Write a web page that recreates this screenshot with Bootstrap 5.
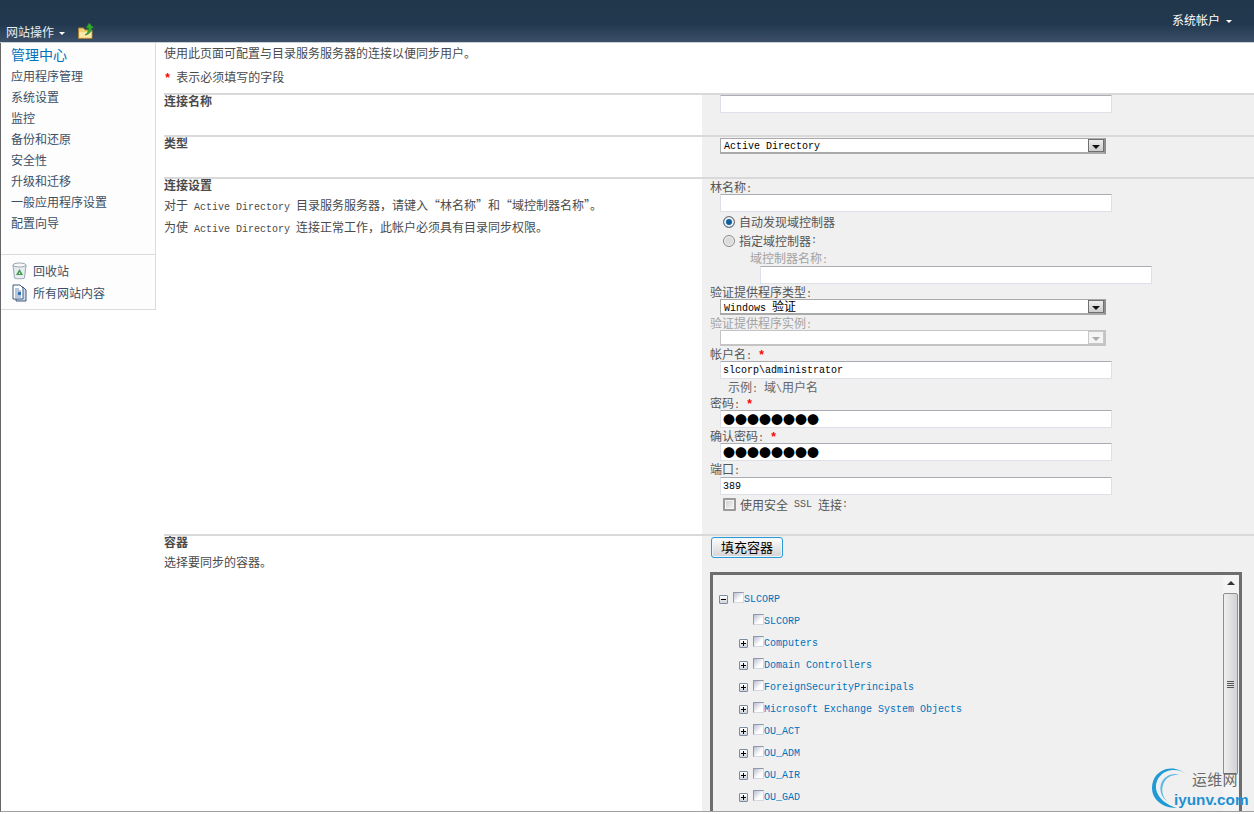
<!DOCTYPE html>
<html lang="zh-CN">
<head>
<meta charset="utf-8">
<title>连接设置</title>
<link href="https://cdn.jsdelivr.net/npm/bootstrap@5.3.0/dist/css/bootstrap.min.css" rel="stylesheet">
<style>
html,body{height:814px;overflow:hidden;background:#fff}
body{font-family:"Noto Sans CJK SC","Liberation Sans",sans-serif;font-size:12px;line-height:15px;color:#4a4a4a;position:relative}
.tl{font-family:"Liberation Mono",monospace;font-size:10px;line-height:1}
.topbar{height:43px;background:linear-gradient(#20374c 0,#21384e 24px,#3c5068 42px);border-bottom:1px solid #c6ced6;color:#fff;padding:0 22px 0 6px}
.site-act{align-self:flex-end;height:20px;line-height:20px;color:#e9eef3}
.sys-user{margin-top:12px;line-height:15px;color:#fff}
.drop-tri{display:inline-block;width:0;height:0;border:3px solid transparent;border-top:3px solid #fff;border-bottom:0;vertical-align:middle}
.site-act .drop-tri{margin-left:5px}
.sys-user .drop-tri{margin-left:6px}
.up-icon{width:17px;height:16px;margin:0 0 3px 13px;align-self:flex-end}
.shell{height:769px;border-left:1px solid #666;border-bottom:1px solid #a0a0a0}
.side{width:155px;height:267px;flex:none;background:#fdfdfd;border-right:1px solid #dcdcdc;border-bottom:1px solid #dcdcdc}
.side-top{padding:1px 0 0 10px;height:211px}
.side-title{font-size:14px;line-height:21px;color:#0072bc}
.side .nav-link{padding:0;line-height:21px;color:#3b4f65;font-size:12px}
.side-low{border-top:1px solid #dcdcdc;padding:5px 0 0 11px}
.side-low .nav-link{display:flex;align-items:center;gap:6px;line-height:22px}
.side-low svg{width:15px;height:18px;flex:none}
.main-area{padding-left:8px;min-width:0;height:768px}
.intro{height:50px;padding-top:0}
.intro p{margin:0 0 4px;line-height:20px}
.req{color:#f00;font-family:"Liberation Mono",monospace;font-weight:700}
.req-gap{margin-right:5px}
.sect{border-top:2px solid #d9d9d9;flex:none}
.sect-a{height:42px}
.sect-c{height:357px}
.sect-d{flex:1 1 auto;min-height:0;overflow:hidden}
.sect-left{width:538px;flex:none}
.sect-left h6{font-size:12px;font-weight:700;line-height:11px;height:15px;margin:0;color:#4a4a4a}
.sect-left p{margin:0;line-height:22px}
.sect-right{flex:1 1 auto;background:#f0f0f0;padding-left:8px;min-width:0}
.lbl{height:15px;line-height:15px;color:#555}
.lbl-tall{height:16px}
.lbl-off{color:#a3a3a3}
.lbl-sub{height:16px;line-height:16px;padding-left:40px;color:#a3a3a3}
.hint{height:16px;line-height:16px;padding-left:18px;color:#666}
.inp.form-control{width:392px;height:18px;min-height:0;margin-left:10px;padding:0 2px;border:1px solid #dde1e7;border-top-color:#a9acb3;border-radius:1px;background:#fff;font-family:"Liberation Mono",monospace;font-size:10px;line-height:16px;color:#000;box-shadow:none}
.inp-sub.form-control{margin-left:50px}
.inp-dots.form-control{font-family:"Noto Sans CJK SC",sans-serif;font-size:12px;letter-spacing:0}
.dd{width:386px;height:16px;margin-left:10px;border:2px solid #a9a9a9;border-right-color:#8e8e8e;border-left-width:1px;border-top-width:1px;background:#fff;color:#000;line-height:11px}
.dd-val{flex:1 1 auto;padding-left:3px;white-space:nowrap}
.dd-val.tl{line-height:15px}
.dd-arrow{width:16px;flex:none;background:linear-gradient(#eee,#ccc);border:1px solid #6f6f6f;display:flex;align-items:flex-end;justify-content:center;padding-bottom:2px}
.dd-arrow i{display:block;width:0;height:0;border:4px solid transparent;border-top:4px solid #111;border-bottom:0}
.dd-off{border-color:#c4c4c4}
.dd-off .dd-arrow{background:#f4f4f4;border-color:#c8c8c8}
.dd-off .dd-arrow i{border-top-color:#aaa}
.dd-mt{margin-top:1px}
.opt{height:19px;padding-left:13px;color:#555}
.opt .form-check-input{width:12px;height:12px;margin:0 4px 0 0;flex:none;border:1px solid #8b8b8b;background-color:#dcdcdc;box-shadow:inset 0 0 0 1px #f5f5f5;opacity:1}
.opt .form-check-input:checked{background-image:none;background-color:#0d5f9f;border-color:#777;box-shadow:inset 0 0 0 2px #f0f0f0}
.opt .form-check-input[type=checkbox]{width:13px;height:13px;border:2px solid #9a9a9a;border-radius:1px;background:linear-gradient(135deg,#cfcfcf,#f6f6f6)}
.fill-btn.btn{display:block;width:72px;height:21px;margin:1px 0 14px 1px;padding:0 0 2px;border:1px solid #2b9ad6;border-radius:3px;background:linear-gradient(#fdfdfd,#d4d4d4);box-shadow:inset 0 0 0 1px #eaf6fb;color:#000;font-size:13px;line-height:15px}
.treebox{width:532px;height:320px;border:3px solid #6d6d6d;flex:none}
.tree{flex:1 1 auto;padding:13px 0 0 6px;color:#0072bc}
.tree-row{height:22px;display:flex;align-items:center}
.tree-kid{padding-left:20px}
.tgl{width:9px;height:9px;flex:none;margin-right:5px;border:1px solid #7c8ba0;border-radius:1px;background:linear-gradient(#fff,#cfd4da);position:relative}
.tgl::before{content:"";position:absolute;left:1px;right:1px;top:3px;height:1px;background:#000}
.tgl-plus::after{content:"";position:absolute;top:1px;bottom:1px;left:3px;width:1px;background:#000}
.tgl-none{visibility:hidden}
.tick{width:11px;height:11px;flex:none;margin:-4px 0 0 0;border:1px solid #9097aa;border-right-color:#d5d9e2;border-bottom-color:#d5d9e2;background:linear-gradient(135deg,#b9bfd0,#fff 65%)}
.tree-txt{font-size:10px;font-family:"Liberation Mono",monospace;white-space:nowrap;line-height:15px}
.sbar{width:15px;flex:none;margin-right:1px;padding-top:6px;background:#f4f4f4}
.sbar-up{display:block;width:0;height:0;margin:0 auto 8px;border:4px solid transparent;border-bottom:4px solid #333;border-top:0}
.sbar-thumb{height:182px;width:15px;border:1px solid #8f8f8f;border-radius:2px;background:linear-gradient(90deg,#efefef,#d2d2d6);display:flex;flex-direction:column;justify-content:center;align-items:center;gap:1px}
.sbar-thumb i{display:block;width:7px;height:1px;background:#555}
.brand{position:absolute;left:1150px;top:764px;width:104px;height:46px;pointer-events:none}
.brand svg{position:absolute;left:0;top:0;width:46px;height:46px}
.brand-cn{position:absolute;left:42px;top:5px;font-size:15px;line-height:20px;color:#6a6a6a;letter-spacing:.3px;white-space:nowrap}
.brand-en{position:absolute;left:24px;top:27px;font-family:"Liberation Sans",sans-serif;font-weight:700;font-size:15.3px;line-height:18px;color:#1e90d2;white-space:nowrap}
</style>
</head>
<body>
<header class="topbar d-flex justify-content-between">
  <div class="d-flex">
    <div class="site-act">网站操作<span class="drop-tri"></span></div>
    <svg class="up-icon" viewBox="0 0 17 16" aria-hidden="true"><path d="M.5 5h5l1.500 2h7v8.500H.5z" fill="#f3cf73" stroke="#a8813a"/><path d="M1.500 9h12v5.500h-12z" fill="#fbe7a8"/><path d="M11 0l5 5h-2.500c0 4-2.500 6.500-6.500 7 2.500-1.500 3.500-3.500 3.500-7H8z" fill="#35a92f" stroke="#1f7a22" stroke-width=".6"/></svg>
  </div>
  <div class="sys-user">系统帐户<span class="drop-tri"></span></div>
</header>
<div class="shell d-flex">
  <aside class="side">
    <div class="side-top">
      <div class="side-title">管理中心</div>
      <nav class="nav flex-column">
        <a class="nav-link" href="#">应用程序管理</a>
        <a class="nav-link" href="#">系统设置</a>
        <a class="nav-link" href="#">监控</a>
        <a class="nav-link" href="#">备份和还原</a>
        <a class="nav-link" href="#">安全性</a>
        <a class="nav-link" href="#">升级和迁移</a>
        <a class="nav-link" href="#">一般应用程序设置</a>
        <a class="nav-link" href="#">配置向导</a>
      </nav>
    </div>
    <nav class="nav flex-column side-low">
      <a class="nav-link" href="#"><svg viewBox="0 0 15 18" aria-hidden="true"><path d="M1 3l1.500 13c0 1 10 1 10 0L14 3z" fill="#e6edf2" stroke="#9aa6ae"/><ellipse cx="7.500" cy="3" rx="6.500" ry="2" fill="#f6f8fa" stroke="#9aa6ae"/><path d="M7.500 7l3.500 6H4z" fill="#3f9a4a"/><path d="M7.500 10l1 2h-2z" fill="#dff1e0"/></svg>回收站</a>
      <a class="nav-link" href="#"><svg viewBox="0 0 15 18" aria-hidden="true"><path d="M4 3h7l3 3v11H4z" fill="#cfdcec" stroke="#3d5a80"/><path d="M1 1h7l3 3v11H1z" fill="#fff" stroke="#3d5a80"/><path d="M3 5h4M3 7h6M3 9h6M3 11h6M3 13h6" stroke="#6f8db5"/><path d="M6 8h3v3H6z" fill="#2f6fb5"/></svg>所有网站内容</a>
    </nav>
  </aside>
  <main class="main-area flex-grow-1 d-flex flex-column">
    <div class="intro">
      <p>使用此页面可配置与目录服务服务器的连接以便同步用户。</p>
      <p><span class="req req-gap">*</span>表示必须填写的字段</p>
    </div>
    <section class="sect sect-a d-flex">
      <div class="sect-left"><h6>连接名称</h6></div>
      <div class="sect-right"><input class="form-control inp" type="text" value="" aria-label="连接名称"></div>
    </section>
    <section class="sect sect-a d-flex">
      <div class="sect-left"><h6>类型</h6></div>
      <div class="sect-right"><div class="dd dd-mt d-flex"><span class="dd-val tl">Active Directory</span><span class="dd-arrow"><i></i></span></div></div>
    </section>
    <section class="sect sect-c d-flex">
      <div class="sect-left">
        <h6>连接设置</h6>
        <p>对于<span class="tl">&nbsp;Active Directory&nbsp;</span>目录服务服务器，请键入“林名称”和“域控制器名称”。</p>
        <p>为使<span class="tl">&nbsp;Active Directory&nbsp;</span>连接正常工作，此帐户必须具有目录同步权限。</p>
      </div>
      <div class="sect-right">
        <div class="lbl">林名称<span class="tl">:</span></div>
        <input class="form-control inp" type="text" value="" aria-label="林名称">
        <div class="opt d-flex align-items-center"><input class="form-check-input" type="radio" name="dc" checked aria-label="自动发现域控制器">自动发现域控制器</div>
        <div class="opt d-flex align-items-center"><input class="form-check-input" type="radio" name="dc" aria-label="指定域控制器">指定域控制器<span class="tl">:</span></div>
        <div class="lbl-sub">域控制器名称<span class="tl">:</span></div>
        <input class="form-control inp inp-sub" type="text" value="" aria-label="域控制器名称">
        <div class="lbl">验证提供程序类型<span class="tl">:</span></div>
        <div class="dd d-flex"><span class="dd-val"><span class="tl">Windows&nbsp;</span>验证</span><span class="dd-arrow"><i></i></span></div>
        <div class="lbl lbl-off">验证提供程序实例<span class="tl">:</span></div>
        <div class="dd dd-off d-flex"><span class="dd-val"></span><span class="dd-arrow"><i></i></span></div>
        <div class="lbl">帐户名<span class="tl">:&nbsp;</span><span class="req">*</span></div>
        <input class="form-control inp" type="text" value="slcorp\administrator" aria-label="帐户名">
        <div class="hint">示例<span class="tl">:&nbsp;</span>域<span class="tl">\</span>用户名</div>
        <div class="lbl">密码<span class="tl">:&nbsp;</span><span class="req">*</span></div>
        <input class="form-control inp inp-dots" type="text" value="●●●●●●●●" aria-label="密码">
        <div class="lbl">确认密码<span class="tl">:&nbsp;</span><span class="req">*</span></div>
        <input class="form-control inp inp-dots" type="text" value="●●●●●●●●" aria-label="确认密码">
        <div class="lbl lbl-tall">端口<span class="tl">:</span></div>
        <input class="form-control inp" type="text" value="389" aria-label="端口">
        <div class="opt d-flex align-items-center"><input class="form-check-input" type="checkbox" aria-label="使用安全 SSL 连接">使用安全<span class="tl">&nbsp;SSL&nbsp;</span>连接<span class="tl">:</span></div>
      </div>
    </section>
    <section class="sect sect-d d-flex">
      <div class="sect-left">
        <h6>容器</h6>
        <p>选择要同步的容器。</p>
      </div>
      <div class="sect-right">
        <button class="btn fill-btn" type="button">填充容器</button>
        <div class="treebox d-flex">
          <div class="tree">
            <div class="tree-row"><span class="tgl"></span><span class="tick"></span><span class="tree-txt">SLCORP</span></div>
            <div class="tree-row tree-kid"><span class="tgl tgl-none"></span><span class="tick"></span><span class="tree-txt">SLCORP</span></div>
            <div class="tree-row tree-kid"><span class="tgl tgl-plus"></span><span class="tick"></span><span class="tree-txt">Computers</span></div>
            <div class="tree-row tree-kid"><span class="tgl tgl-plus"></span><span class="tick"></span><span class="tree-txt">Domain Controllers</span></div>
            <div class="tree-row tree-kid"><span class="tgl tgl-plus"></span><span class="tick"></span><span class="tree-txt">ForeignSecurityPrincipals</span></div>
            <div class="tree-row tree-kid"><span class="tgl tgl-plus"></span><span class="tick"></span><span class="tree-txt">Microsoft Exchange System Objects</span></div>
            <div class="tree-row tree-kid"><span class="tgl tgl-plus"></span><span class="tick"></span><span class="tree-txt">OU_ACT</span></div>
            <div class="tree-row tree-kid"><span class="tgl tgl-plus"></span><span class="tick"></span><span class="tree-txt">OU_ADM</span></div>
            <div class="tree-row tree-kid"><span class="tgl tgl-plus"></span><span class="tick"></span><span class="tree-txt">OU_AIR</span></div>
            <div class="tree-row tree-kid"><span class="tgl tgl-plus"></span><span class="tick"></span><span class="tree-txt">OU_GAD</span></div>
          </div>
          <div class="sbar"><span class="sbar-up"></span><div class="sbar-thumb"><i></i><i></i><i></i><i></i></div></div>
        </div>
      </div>
    </section>
  </main>
</div>
<div class="brand">
  <svg viewBox="0 0 46 46" aria-hidden="true"><path d="M37 11C30 4 18 2 10 8 1 14 0 27 5 34c5 7 13 10 22 10C17 41 8 35 6 25 5 15 12 7 22 6c6-.5 11 1 15 5z" fill="#1e9ad6"/><path d="M30 11C22 8 14 12 11 20c-2 7 1 14 7 18-5-4-7-11-5-17 2-7 9-11 17-10z" fill="#5db8e4"/></svg>
  <span class="brand-cn">运维网</span>
  <span class="brand-en">iyunv.com</span>
</div>
<script src="https://cdn.jsdelivr.net/npm/bootstrap@5.3.0/dist/js/bootstrap.bundle.min.js"></script>
</body>
</html>
